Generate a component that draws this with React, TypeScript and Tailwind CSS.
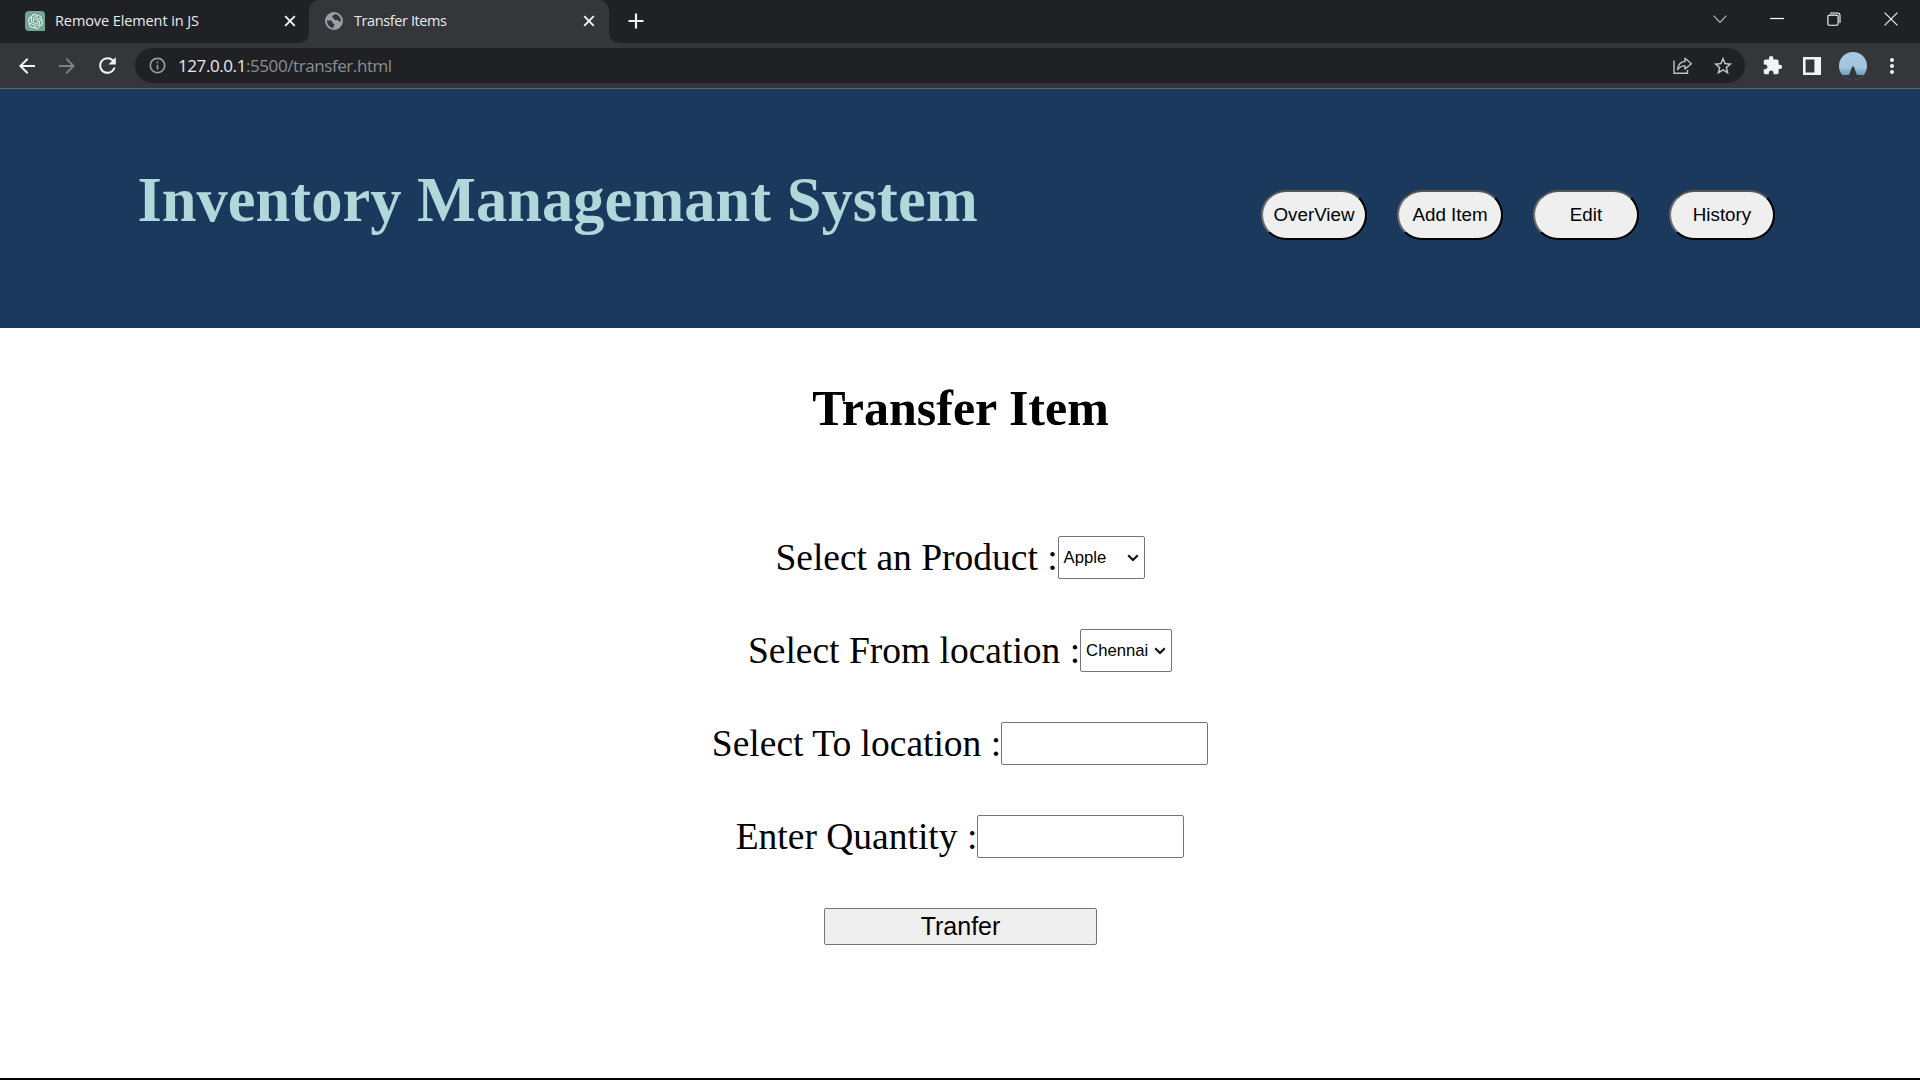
import React from "react";
import { MdArrowBack, MdArrowForward, MdRefresh, MdExtension, MdStarBorder, MdInfoOutline } from "react-icons/md";
import { SiOpenai } from "react-icons/si";

function CloseX() {
  return (
    <svg width="12" height="12" viewBox="0 0 12 12" className="shrink-0">
      <path d="M1.2 1.2 10.8 10.8M10.8 1.2 1.2 10.8" stroke="#f1f3f4" strokeWidth="1.9" fill="none" />
    </svg>
  );
}

function TabStrip() {
  return (
    <div className="flex h-[43px] bg-[#202124] text-[15px] text-[#e8eaed]">
      <div className="flex h-[42px] w-[309px] items-center pl-[25px] pr-[13px]">
        <span className="flex size-5 items-center justify-center rounded-[4px] rounded-br-none bg-[#74a594]">
          <SiOpenai size={15} color="#e9f5f0" />
        </span>
        <span className="ml-[10px] flex-1 whitespace-nowrap text-[14.5px] leading-[20px] tracking-[-0.1px]">Remove Element in JS</span>
        <CloseX />
      </div>
      <div className="relative flex h-[43px] w-[300px] items-center rounded-t-[10px] bg-[#35363a] pb-px pl-4 pr-[14px]">
        <svg className="absolute bottom-0 left-[-10px]" width="10" height="10">
          <path d="M10 0V10H0A10 10 0 0 0 10 0Z" fill="#35363a" />
        </svg>
        <svg className="absolute bottom-0 right-[-10px]" width="10" height="10">
          <path d="M0 0V10H10A10 10 0 0 1 0 0Z" fill="#35363a" />
        </svg>
        <svg width="18" height="18" viewBox="0 0 18 18" className="shrink-0">
          <circle cx="9" cy="9" r="9" fill="#9aa0a6" />
          <path
            d="M2 8.3C4 8.7 6.4 8 7.2 9.3C7.8 10.4 7 11.2 8.2 11.6C9.8 12 9.7 13.4 8.6 14.4L8.2 16A7 7 0 0 1 2 8.3ZM10 2.1C9 3.3 7.4 3.3 7 4.6C6.7 5.8 8.5 5.5 8.7 6.6C9 7.9 10.4 8.4 12 8C13.2 7.8 13.2 9.4 14.6 9.6H16A7 7 0 0 0 10 2.1Z"
            fill="#35363a"
          />
        </svg>
        <span className="ml-[11px] flex-1 whitespace-nowrap text-[14.5px] leading-[20px] tracking-[-0.4px]">Transfer Items</span>
        <CloseX />
      </div>
      <svg width="16" height="16" viewBox="0 0 16 16" className="ml-[19px] mt-[13px]">
        <path d="M8 0.5V15.5M0.5 8H15.5" stroke="#f1f3f4" strokeWidth="2.2" />
      </svg>
      <div className="ml-auto flex h-[37px] items-center gap-[43px] pr-[22px]">
        <svg width="14" height="14" viewBox="0 0 14 14" fill="none" stroke="#b5b6b8" strokeWidth="1.2">
          <path d="M0.6 3.6 7 10.4 13.4 3.6" />
        </svg>
        <svg width="14" height="14" viewBox="0 0 14 14">
          <path d="M0 6.5H14" stroke="#fff" strokeWidth="1.2" />
        </svg>
        <svg width="14" height="14" viewBox="0 0 14 14" fill="none" stroke="#fff" strokeWidth="1.1">
          <rect x="0.9" y="3.1" width="10.2" height="10.2" rx="1.5" />
          <path d="M3 1H10.5Q13 1 13 3.5V11" />
        </svg>
        <svg width="14" height="14" viewBox="0 0 14 14">
          <path d="M0.6 0.6 13.4 13.4M13.4 0.6 0.6 13.4" stroke="#e8e8e8" strokeWidth="1.3" />
        </svg>
      </div>
    </div>
  );
}

function Toolbar() {
  return (
    <div className="flex h-[46px] items-center border-b border-[#5b6472] bg-[#35363a] pl-[15px]">
      <MdArrowBack size={24} color="#f1f3f4" className="shrink-0" />
      <MdArrowForward size={24} color="#7d7f82" className="ml-4 shrink-0" />
      <MdRefresh size={25} color="#f1f3f4" className="ml-4 shrink-0" />
      <div className="ml-[15px] flex h-[35px] w-[1610px] items-center rounded-full bg-[#202124] pl-[13px]">
        <MdInfoOutline size={19} color="#9aa0a6" className="shrink-0" />
        <span className="ml-[11px] whitespace-nowrap text-[17px] leading-[24px] tracking-[-0.42px] text-[#8b8e92]">
          <span className="text-[#e8eaed]">127.0.0.1</span>:5500/transfer.html
        </span>
        <svg width="20" height="18" viewBox="0 0 20 18" fill="none" stroke="#bdc1c6" strokeWidth="1.4" className="ml-auto">
          <path d="M1 3.5V16.3H14.5V13" />
          <path d="M12 1.2 18.4 6.7 12 12V8.9C8.5 8.8 6.3 10.2 4.6 12.6C5 8.4 7.4 4.9 12 4.4Z" strokeLinejoin="round" />
        </svg>
        <MdStarBorder size={22} color="#c4c7cb" className="ml-[19px] mr-[11px]" />
      </div>
      <MdExtension size={21} color="#f1f3f4" className="ml-[17px] shrink-0" />
      <svg width="18" height="18" viewBox="0 0 18 18" className="ml-5 shrink-0">
        <path d="M0 0H18V18H0ZM2.6 2.6V15.4H11.4V2.6Z" fill="#f1f3f4" fillRule="evenodd" />
      </svg>
      <svg width="28" height="28" viewBox="0 0 28 28" className="ml-[18px] shrink-0">
        <defs>
          <linearGradient id="sky" x1="0" y1="0" x2="0" y2="1">
            <stop offset="0" stopColor="#a5cbe3" />
            <stop offset="0.55" stopColor="#a3c5dc" />
            <stop offset="0.82" stopColor="#6d9dbd" />
          </linearGradient>
          <clipPath id="face">
            <circle cx="14" cy="14" r="14" />
          </clipPath>
        </defs>
        <g clipPath="url(#face)">
          <rect width="28" height="28" fill="url(#sky)" />
          <path d="M0 23H10L13 15Q14 13.5 15 15L18 23H28V28H0Z" fill="#30373f" />
        </g>
      </svg>
      <svg width="6" height="18" viewBox="0 0 6 18" fill="#f1f3f4" className="ml-[22px]">
        <circle cx="3" cy="3" r="2" />
        <circle cx="3" cy="9" r="2" />
        <circle cx="3" cy="15" r="2" />
      </svg>
    </div>
  );
}

function NavButton({ label }: { label: string }) {
  return (
    <button className="h-[50px] w-[106px] whitespace-nowrap rounded-[25px] border-2 border-b-black border-l-[#6b6b6b] border-r-black border-t-[#555] bg-[#efefef] text-[18.75px] leading-[22px] text-black">
      {label}
    </button>
  );
}

function Field({ label, children }: { label: string; children: React.ReactNode }) {
  return (
    <label className="flex h-[43px] items-center whitespace-nowrap text-[37.5px] leading-[43px]">
      {label}
      {children}
    </label>
  );
}

function Picker({ value, size }: { value: string; size: string }) {
  return (
    <span className={`${size} flex h-[43px] items-center justify-between rounded-[2px] border border-[#767676] bg-white pl-[5px] pr-[5px] font-['Liberation_Sans',Arial,sans-serif] text-[16.67px] leading-[20px]`}>
      {value}
      <svg width="12" height="8" viewBox="0 0 12 8" fill="none" stroke="#111" strokeWidth="2.1">
        <path d="M1.2 1.3 6 6.1 10.8 1.3" />
      </svg>
    </span>
  );
}

const inputClass = "h-[43px] w-[207px] rounded-[2px] border border-[#767676] bg-white px-1 text-[16.67px] outline-none";

export default function App() {
  return (
    <div className="flex h-[1080px] w-[1920px] flex-col overflow-hidden border-b-2 border-black bg-white font-['Liberation_Serif','Times_New_Roman',serif] text-black">
      <div className="shrink-0 font-['Open_Sans','Noto_Sans',sans-serif]">
        <TabStrip />
        <Toolbar />
      </div>
      <header className="flex h-[239px] shrink-0 justify-between bg-[#1a395c] pl-[137.5px] pr-[145px]">
        <h1 className="mt-[75px] whitespace-nowrap text-[62.5px] font-bold leading-[72px] text-[#b0d8da]">Inventory Managemant System</h1>
        <nav className="mt-[101px] flex gap-[30px] font-['Liberation_Sans',Arial,sans-serif]">
          <NavButton label="OverView" />
          <NavButton label="Add Item" />
          <NavButton label="Edit" />
          <NavButton label="History" />
        </nav>
      </header>
      <main className="flex flex-col items-center">
        <h2 className="mt-[51px] whitespace-nowrap pl-px text-[50px] font-bold leading-[58px]">Transfer Item</h2>
        <form className="mt-[99px] flex flex-col items-center gap-[50px]">
          <Field label="Select an Product :">
            <Picker value="Apple" size="w-[87px]" />
          </Field>
          <Field label="Select From location :">
            <Picker value="Chennai" size="w-[92px]" />
          </Field>
          <Field label="Select To location :">
            <input className={inputClass} />
          </Field>
          <Field label="Enter Quantity :">
            <input className={inputClass} />
          </Field>
          <button type="button" className="ml-px h-[37px] w-[273px] rounded-[2px] border border-[#767676] bg-[#efefef] font-['Liberation_Sans',Arial,sans-serif] text-[25px] leading-[29px]">
            Tranfer
          </button>
        </form>
      </main>
    </div>
  );
}
